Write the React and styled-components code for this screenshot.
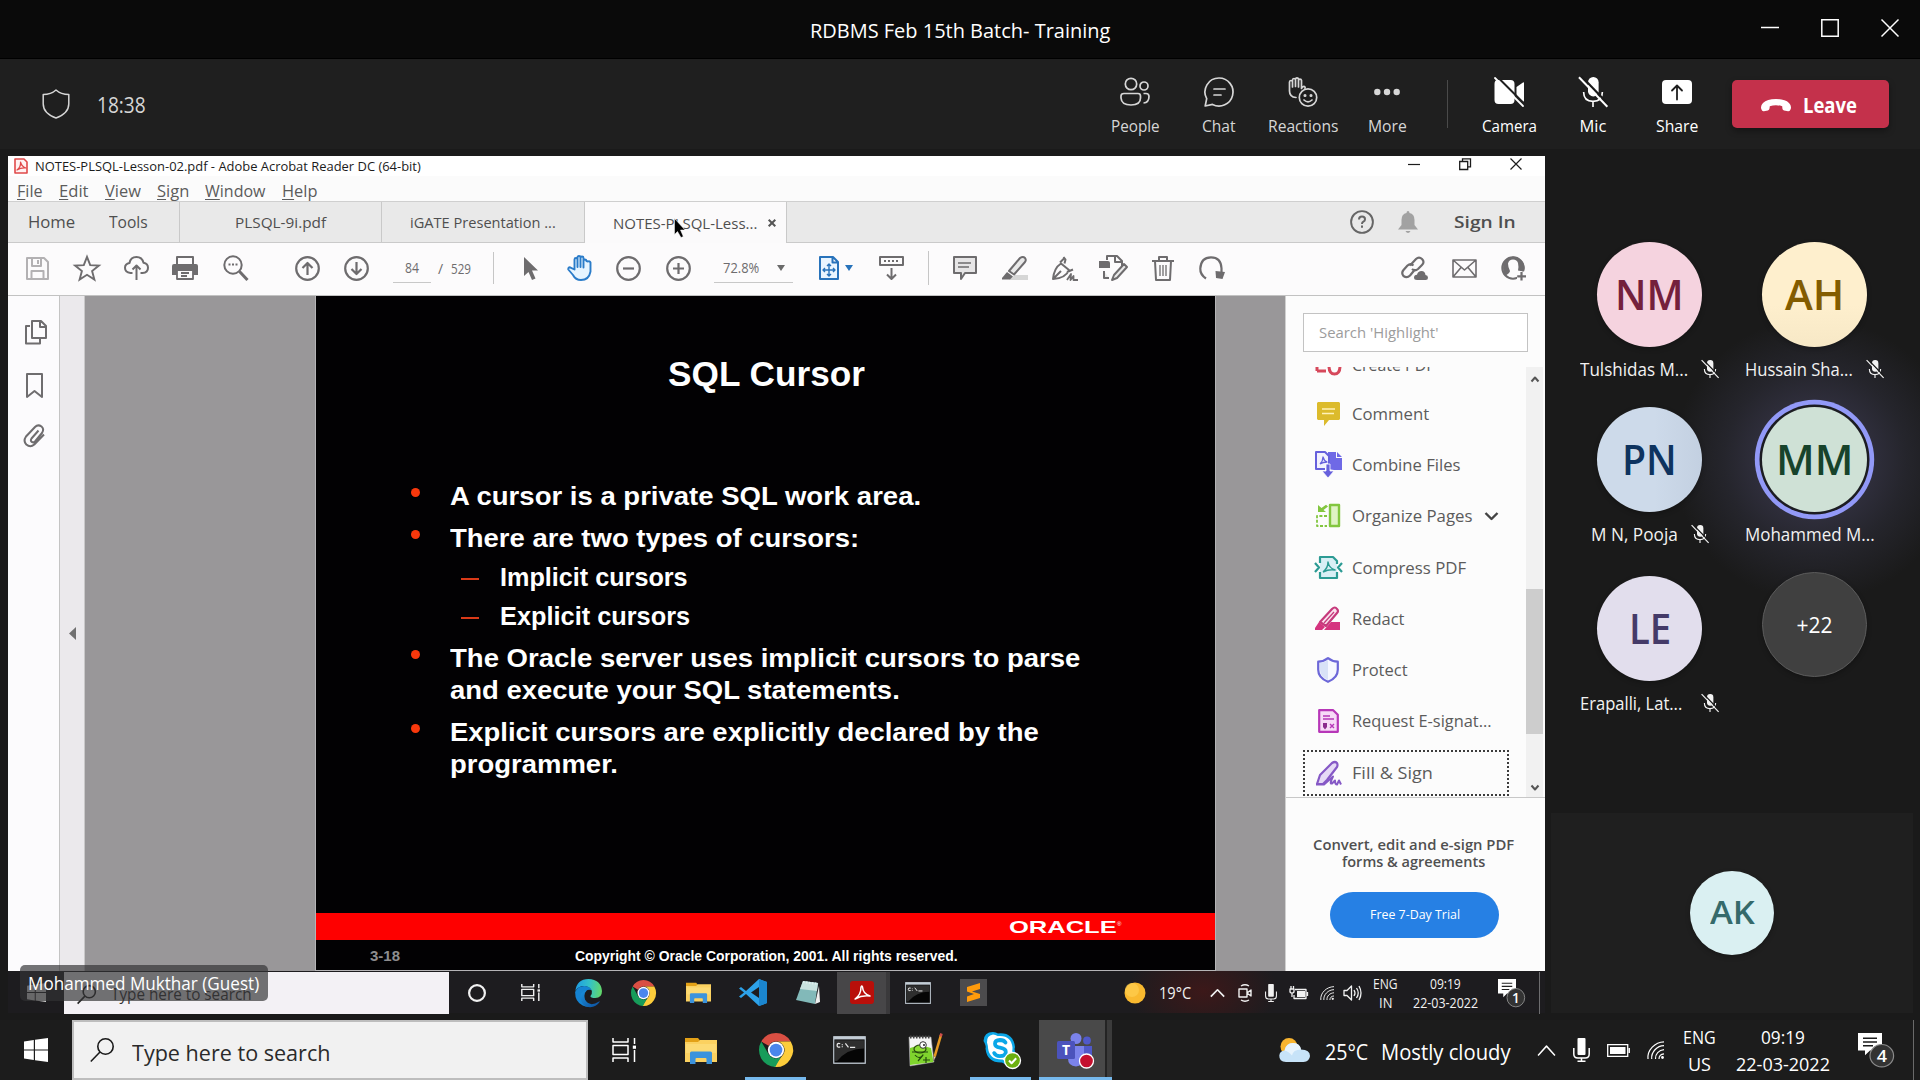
import React, { useLayoutEffect, useRef, useState } from "react";
import styled, { createGlobalStyle, css } from "styled-components";

const Global = createGlobalStyle`
  *, *::before, *::after { box-sizing: border-box; }
  html, body { margin: 0; padding: 0; background: #1a1a1a; overflow: hidden; }
  body { font-family: "Open Sans", "Noto Sans", sans-serif; }
  svg { display: block; flex: none; overflow: visible; }
`;

const arial = css`font-family: "Liberation Sans", Arial, sans-serif;`;

/* ---------- text that is condensed or stretched to a set measure ---------- */
const Measure = styled.span`
  display: block;
  flex: none;
  white-space: nowrap;
  width: ${(p) => p.$w}px;
  margin-left: ${(p) => p.$ml || 0}px;
  font-size: ${(p) => p.$size || "inherit"}${(p) => (p.$size ? "px" : "")};
  font-weight: ${(p) => p.$weight || "inherit"};
  color: ${(p) => p.$color || "inherit"};
`;
const Glyphs = styled.span`
  display: inline-block;
  transform-origin: 0 50%;
  vertical-align: top;
`;
function Fit({ w, ml, size, weight, color, children }) {
  const ref = useRef(null);
  const [scale, setScale] = useState(1);
  useLayoutEffect(() => {
    const natural = ref.current.offsetWidth;
    if (natural) setScale(w / natural);
  }, [w, children]);
  return (
    <Measure $w={w} $ml={ml} $size={size} $weight={weight} $color={color}>
      <Glyphs ref={ref} style={{ transform: `scaleX(${scale})` }}>{children}</Glyphs>
    </Measure>
  );
}

/* ---------- drawing helper ---------- */
const Drawing = styled.svg`
  width: ${(p) => p.$w}px;
  height: ${(p) => p.$h}px;
  margin-left: ${(p) => p.$ml || 0}px;
  fill: none;
  stroke: ${(p) => p.$c || "currentColor"};
  stroke-width: ${(p) => p.$sw || 2};
  stroke-linejoin: round;
  stroke-linecap: ${(p) => p.$cap || "butt"};
`;
function I({ w, h, ml, c, sw, cap, vb, children }) {
  return (
    <Drawing $w={w} $h={h || w} $ml={ml} $c={c} $sw={sw} $cap={cap} viewBox={vb || `0 0 ${w} ${h || w}`} preserveAspectRatio="none">
      {children}
    </Drawing>
  );
}

const Grow = styled.div`flex: 1;`;
const Rule = styled.div`
  flex: none;
  width: 1px;
  height: ${(p) => p.$h}px;
  margin-left: ${(p) => p.$ml || 0}px;
  background: ${(p) => p.$c};
`;

/* ---------- shell ---------- */
const Screen = styled.div`
  width: 1920px;
  height: 1080px;
  display: flex;
  flex-direction: column;
  background: #1a1a1a;
  overflow: hidden;
`;
const TitleBar = styled.header`
  height: 59px;
  flex: none;
  display: grid;
  grid-template-columns: 1fr auto 1fr;
  align-items: center;
  background: #0a0a0a;
  border-bottom: 1px solid #000;
  color: #fff;
  line-height: 30px;
  padding-top: 1px;
`;
const WindowButtons = styled.div`
  display: flex;
  justify-content: flex-end;
  align-items: center;
  gap: ${(p) => p.$gap}px;
  padding: 0 ${(p) => p.$pr}px ${(p) => p.$pb || 0}px 0;
`;
const CallBar = styled.div`
  height: 90px;
  flex: none;
  display: flex;
  align-items: flex-start;
  background: #1f1f1f;
  color: #d6d6d6;
`;
const CallInfo = styled.div`
  display: flex;
  align-items: center;
  height: 90px;
  padding-left: 42px;
`;
const Clock = styled.div`
  padding-top: 2px;
  line-height: 30px;
`;
const CallDivider = styled.div`
  width: 1px;
  height: 48px;
  margin: 21px 19px 0 18px;
  background: #4a4a4a;
`;
const CallButton = styled.div`
  width: 84px;
  display: flex;
  flex-direction: column;
  align-items: center;
  padding-top: 18px;
  color: ${(p) => (p.$bright ? "#fff" : "#d6d6d6")};
`;
const CallIcon = styled.div`
  height: 30px;
  display: flex;
  align-items: center;
`;
const CallLabel = styled.div`
  margin-top: 8px;
  line-height: 22px;
  font-size: 16.5px;
`;
const Leave = styled.div`
  width: 157px;
  height: 48px;
  margin: 21px 31px 0 13px;
  padding: 2px 0 0 29px;
  display: flex;
  align-items: center;
  background: #c4314b;
  border-radius: 5px;
  color: #fff;
  box-shadow: 0 3px 6px rgba(0, 0, 0, 0.35);
`;
const Main = styled.main`
  height: 871px;
  flex: none;
  display: flex;
  padding: 7px 0 0 8px;
`;

/* ---------- shared desktop ---------- */
const Stage = styled.section`
  position: relative;
  width: 1537px;
  height: 857px;
  flex: none;
  display: flex;
  flex-direction: column;
  background: #fdfdfd;
  color: #5a5a5a;
`;
const AppTitle = styled.div`
  height: 20px;
  display: flex;
  align-items: center;
  padding-left: 6px;
  color: #1c1c1c;
  background: #fff;
  line-height: 18px;
`;
const MenuRow = styled.div`
  height: 25px;
  padding: 5px 0 0 9px;
  display: flex;
  gap: 16px;
  line-height: 20px;
  font-size: 15.5px;
  color: #5c5c5c;
  background: #fbfbfb;
`;
const Access = styled.span`text-decoration: underline; text-underline-offset: 2px;`;
const TabStrip = styled.div`
  height: 42px;
  display: flex;
  align-items: stretch;
  background: #e9e9e9;
  border-top: 1px solid #cfcfcf;
  border-bottom: 1px solid #cacaca;
  line-height: 24px;
  color: #4f4f4f;
`;
const HomeTabs = styled.div`
  width: 172px;
  padding-left: 20px;
  display: flex;
  align-items: center;
  border-right: 1px solid #c9c9c9;
`;
const DocTab = styled.div`
  width: ${(p) => p.$w}px;
  display: flex;
  align-items: center;
  justify-content: ${(p) => (p.$active ? "flex-start" : "center")};
  padding-left: ${(p) => (p.$active ? 28 : 0)}px;
  border-right: 1px solid #c9c9c9;
  background: ${(p) => (p.$active ? "#fbfafb" : "transparent")};
  margin-bottom: ${(p) => (p.$active ? -1 : 0)}px;
`;
const TabTools = styled.div`
  display: flex;
  align-items: center;
  padding-right: 29px;
`;
const ToolRow = styled.div`
  height: 53px;
  padding: 0 18px 2px 18px;
  display: flex;
  align-items: center;
  color: #6e6c6e;
  border-bottom: 1px solid #c2c2c2;
  background: #fcfbfc;
`;
const Field = styled.div`
  width: ${(p) => p.$w}px;
  height: 30px;
  margin-left: ${(p) => p.$ml}px;
  padding-left: ${(p) => p.$pl}px;
  display: flex;
  align-items: center;
  border-bottom: 1px solid #c8c8c8;
`;
const Workspace = styled.div`
  height: 675px;
  display: flex;
  background: #999799;
`;
const NavRail = styled.div`
  width: 52px;
  padding: 24px 0 0 15px;
  display: flex;
  flex-direction: column;
  background: #fcfbfd;
  border-right: 1px solid #c4c4c4;
  color: #6f6d6f;
`;
const Collapse = styled.div`
  width: 25px;
  display: flex;
  align-items: center;
  justify-content: center;
  background: #ebe9ec;
  border-right: 1px solid #c9c8c9;
`;
const Slide = styled.article`
  ${arial}
  width: 901px;
  margin: 0 69px 0 230px;
  display: flex;
  flex-direction: column;
  background: #020103;
  border: solid #b5b4b6;
  border-width: 0 1px 1px 1px;
  color: #fff;
  font-weight: 700;
`;
const SlideTitle = styled.div`
  margin: 58px 0 85px 352px;
  height: 40px;
  line-height: 40px;
`;
const Bullets = styled.div`
  flex: 1;
  padding: 0.5px 0 0 95px;
  font-size: 26px;
  line-height: 32px;
`;
const Bullet = styled.div`
  display: grid;
  grid-template-columns: 39px 1fr;
  margin-left: ${(p) => (p.$sub ? 50 : 0)}px;
  margin-bottom: ${(p) => p.$mb || 0}px;
`;
const Dot = styled.i`
  width: 9px;
  height: 9px;
  margin-top: 8px;
  border-radius: 50%;
  background: #f8380c;
`;
const Dash = styled.i`
  width: 18px;
  height: 2px;
  margin-top: 17px;
  background: #d93a18;
`;
const RedBand = styled.div`
  height: 27px;
  padding: 1px 0 0 693px;
  display: flex;
  align-items: center;
  background: #fe0000;
  line-height: 27px;
`;
const Registered = styled.sup`
  ${arial}
  font-size: 6px;
  line-height: 8px;
  font-weight: 400;
  align-self: flex-start;
  margin-top: 6px;
`;
const SlideFoot = styled.div`
  height: 30px;
  padding: 1px 0 0 54px;
  display: flex;
  align-items: center;
  line-height: 20px;
`;

/* ---------- tools pane ---------- */
const ToolsPane = styled.aside`
  width: 260px;
  display: flex;
  flex-direction: column;
  background: #fcfcfc;
  border-left: 1px solid #d0d0d0;
`;
const SearchTools = styled.div`
  width: 225px;
  height: 39px;
  margin: 17px 0 15px 17px;
  padding: 0 0 2px 15px;
  display: flex;
  align-items: center;
  border: 1px solid #c3c3c3;
  background: #fff;
  color: #9c9c9c;
`;
const ToolArea = styled.div`
  height: 431px;
  display: flex;
  justify-content: space-between;
  padding: 0 2px 0 17px;
  border-bottom: 1px solid #c8c8c8;
`;
const ToolList = styled.div`
  width: 206px;
  overflow: hidden;
`;
const ToolItem = styled.div`
  height: ${(p) => p.$h || 51.3}px;
  display: flex;
  align-items: center;
  margin-top: ${(p) => p.$mt || 0}px;
  padding-top: ${(p) => p.$pt || 0}px;
  padding-left: ${(p) => (p.$focus ? 9 : 11)}px;
  border: ${(p) => (p.$focus ? "2px dotted #3c3c3c" : "0")};
  color: #5b5b5b;
  font-size: 16.5px;
  line-height: 24px;
`;
const ToolGlyph = styled.div`
  width: 28px;
  margin-right: 10px;
  display: flex;
  justify-content: center;
`;
const ScrollTrack = styled.div`
  width: 17px;
  padding: 9px 0 6px;
  display: flex;
  flex-direction: column;
  align-items: center;
  background: #f1f1f1;
`;
const ScrollThumb = styled.div`
  width: 17px;
  height: 145px;
  margin: 207px 0 auto;
  background: #cdcdcd;
`;
const Promo = styled.div`
  flex: 1;
  padding-top: 39px;
  display: flex;
  flex-direction: column;
  align-items: center;
  padding-right: 4px;
  line-height: 17px;
  color: #505050;
`;
const Trial = styled.div`
  width: 169px;
  height: 46px;
  margin: 21px 0 0 2px;
  padding-bottom: 1px;
  display: flex;
  align-items: center;
  justify-content: center;
  border-radius: 23px;
  background: #2680e4;
  color: #fff;
`;

/* ---------- taskbars ---------- */
const GuestBar = styled.div`
  height: 42px;
  display: flex;
  align-items: center;
  padding: 1px 5px 0 0;
  color: #f1f1f1;
  background: radial-gradient(ellipse 75px 50px at 1195px 20px, #3c1819, rgba(60, 24, 25, 0)), #1d1c1f;
`;
const GuestStart = styled.div`
  width: 56px;
  height: 42px;
  display: flex;
  align-items: center;
  justify-content: center;
`;
const GuestSearch = styled.div`
  width: 385px;
  height: 42px;
  padding: 3px 0 0 13px;
  display: flex;
  align-items: center;
  background: #f3f1f5;
  color: #333;
`;
const GuestActive = styled.div`
  width: 53px;
  height: 42px;
  margin-left: 17px;
  display: flex;
  align-items: center;
  justify-content: center;
  background: #474648;
  border-right: 4px solid #3a393b;
`;
const Stack = styled.div`
  width: ${(p) => p.$w}px;
  margin-left: ${(p) => p.$ml}px;
  padding-top: ${(p) => p.$pt}px;
  display: flex;
  flex-direction: column;
  align-items: center;
  font-size: ${(p) => p.$size}px;
  line-height: ${(p) => p.$lh}px;
`;
const Presenter = styled.div`
  position: absolute;
  left: 12px;
  bottom: 12px;
  width: 248px;
  height: 36px;
  padding: 0 0 1px 8px;
  display: flex;
  align-items: center;
  border-radius: 5px;
  background: rgba(50, 50, 52, 0.68);
  color: #fff;
  line-height: 24px;
`;
const Pointer = styled.div`
  position: absolute;
  left: 666px;
  top: 62px;
`;
const Taskbar = styled.footer`
  height: 60px;
  flex: none;
  display: flex;
  align-items: center;
  padding-right: 6px;
  background: #1c1c1c;
  color: #fff;
`;
const Start = styled.div`
  width: 72px;
  display: flex;
  justify-content: center;
`;
const Search = styled.div`
  width: 516px;
  height: 60px;
  display: flex;
  align-items: center;
  padding-left: 16px;
  border: 2px solid #bdbdbd;
  background: #f1f1f1;
  color: #2a2a2a;
  line-height: 32px;
`;
const SearchHint = styled.div`
  padding-top: 3px;
  margin-left: 18px;
`;
const TaskButton = styled.div`
  width: ${(p) => p.$w || 61}px;
  height: 60px;
  margin-left: ${(p) => p.$ml}px;
  display: flex;
  align-items: center;
  justify-content: center;
  border-bottom: 3px solid ${(p) => (p.$open ? "#76b9ed" : "transparent")};
  padding-top: 3px;
  background: ${(p) => (p.$active ? "linear-gradient(90deg, #494949 66px, #242424 66px, #242424 68px, #3b3b3b 68px)" : "transparent")};
  padding-right: ${(p) => (p.$active ? 1 : 0)}px;
`;

/* ---------- participants ---------- */
const Side = styled.aside`
  width: 375px;
  margin-top: -7px;
  display: flex;
  flex-direction: column;
  padding: 93px 7px 7px 6px;
  background: radial-gradient(circle 142px at 270px 311px, #31303f 35%, #25252c 64%, rgba(26, 26, 26, 0) 100%);
`;
const Roster = styled.div`
  display: grid;
  grid-template-columns: 165px 165px;
  row-gap: 26px;
  padding-left: 16px;
`;
const Person = styled.div`
  height: 139px;
  display: flex;
  flex-direction: column;
  align-items: center;
  margin-top: ${(p) => p.$mt || 0}px;
`;
const Avatar = styled.div`
  width: ${(p) => p.$d || 105}px;
  height: ${(p) => p.$d || 105}px;
  flex: none;
  display: flex;
  align-items: center;
  justify-content: center;
  padding-bottom: ${(p) => (p.$rim ? 0 : 2)}px;
  border-radius: 50%;
  background: ${(p) => p.$bg};
  color: ${(p) => p.$fg};
  border: ${(p) => (p.$rim ? "1px solid #5b5b5b" : "0")};
  box-shadow: ${(p) => (p.$speaking ? "0 0 0 2.5px #1c1c22, 0 0 0 7.2px #9299f7" : "0 2px 5px rgba(0,0,0,.25)")};
  line-height: 50px;
`;
const NameLine = styled.div`
  height: 24px;
  margin-top: 10px;
  display: flex;
  align-items: center;
  justify-content: ${(p) => (p.$min ? "space-between" : "flex-start")};
  gap: 13px;
  color: #f2f2f2;
  line-height: 24px;
  font-size: 18px;
  min-width: ${(p) => p.$min || 0}px;
`;
const SelfTile = styled.div`
  width: 362px;
  height: 200px;
  margin-top: auto;
  display: flex;
  align-items: center;
  justify-content: center;
  background: #1f1f1f;
`;

/* ---------- icons ---------- */
const WinLogo = ({ s, c }) => (
  <I w={s} vb="0 0 24 24"><path stroke="none" fill={c} d="M0 3.4 9.8 2v9.4H0zM11 1.8 24 0v11.4H11zM0 12.6h9.8V22L0 20.6zM11 12.6h13V24l-13-1.8z" /></I>
);
const Glass = ({ w, c, sw }) => (
  <I w={w} vb="0 0 24 24" c={c} sw={sw}><circle cx="15.5" cy="8.5" r="7.7" /><path d="M10 14 .8 23.5" /></I>
);
const TaskView = ({ w, h, ml, sw }) => (
  <I w={w} h={h} ml={ml} vb="0 0 24 24" sw={sw}>
    <path d="M1 0v4h15V0M1 24v-4h15v4M1 7.5h15v9H1zM22.5 0v6M22.5 12v12" /><path d="M20.8 7.6h3.2v3.2h-3.2z" fill="currentColor" stroke="none" />
  </I>
);
const Chrome = ({ w, h, ml }) => (
  <I w={w} h={h} ml={ml} vb="0 0 48 48">
    <g stroke="none">
      <path fill="#d94f43" d="M24 0a24 24 0 0 1 20.8 12H24a12 12 0 0 0-10.4 6L3.2 12A24 24 0 0 1 24 0z" />
      <path fill="#fdcd3b" d="M24 12h20.8A24 24 0 0 1 21 47.8L34.4 30A12 12 0 0 0 24 12z" />
      <path fill="#179c5a" d="M3.2 12 13.6 30A12 12 0 0 0 31 33.700L23 48A24 24 0 0 1 3.200 12z" />
      <circle cx="24" cy="24" r="11.5" fill="#fff" /><circle cx="24" cy="24" r="9" fill="#4a86ec" />
    </g>
  </I>
);
const Edge = ({ w, h, ml }) => (
  <I w={w} h={h} ml={ml} vb="0 0 28 28">
    <defs>
      <linearGradient id="edgeWave" x1="0" y1=".3" x2="1" y2=".4"><stop offset="0" stopColor="#1c9be6" /><stop offset=".55" stopColor="#35c3c4" /><stop offset="1" stopColor="#62d76b" /></linearGradient>
      <linearGradient id="edgeBase" x1="0" y1="0" x2="1" y2="1"><stop offset="0" stopColor="#1b93e0" /><stop offset="1" stopColor="#0d4e9c" /></linearGradient>
    </defs>
    <g stroke="none">
      <path fill="url(#edgeWave)" d="M.3 12Q2 0 14 0q13 .5 14 12 0 7-7 7-5 0-5-2 2-2 1.500-5Q16 8 10.500 7 4 6.500.3 12z" />
      <path fill="#1583d2" d="M.1 13Q3 6.500 10.500 7q5 .5 6.500 4-5-1.500-7 3-2 6 3.500 10.500 3 2 5 2Q14 29 8 26.500 0 23 .1 13z" />
      <path fill="url(#edgeBase)" d="M12.500 11q-5 5-1.500 11 5 6 14 .5 1-.5.500.5-4 6-12 5-7-1.500-8-9Q5 13 12.500 11z" />
    </g>
  </I>
);
const Folder = ({ w, h, ml }) => (
  <I w={w} h={h} ml={ml} vb="0 0 32 27">
    <g stroke="none">
      <path fill="#e3a117" d="M0 1h13l2 2.5V6H0z" /><path fill="#fbd160" d="M0 5h13l2-2h17v22H0z" />
      <path fill="#fddf82" d="M1 7h30v9H1z" opacity=".6" />
      <path fill="#3c93dc" d="M5 27V16q0-1.500 1.500-1.500h19Q27 14.500 27 16v11h-5.500v-5q0-1-1-1h-9q-1 0-1 1v5z" />
    </g>
  </I>
);
const Cmd = ({ w, h, ml }) => (
  <I w={w} h={h} ml={ml} vb="0 0 32 27">
    <rect x=".7" y=".7" width="30.600" height="25.600" fill="#050505" stroke="#aab2ba" strokeWidth="1.4" />
    <path d="M1 2h30" stroke="#c3cdd6" strokeWidth="2.600" /><path d="M2 4h28v8Q14 12 4 24H2z" fill="#4a4a4a" stroke="none" opacity=".6" />
    <path d="M7 7.500q-3-1-3 1.500t3 1.500M9 8v.8M9 10v.8M12 7l3 4M16.500 11h5" stroke="#e8e8e8" strokeWidth="1.200" />
  </I>
);
const Mic = ({ w, h, ml }) => (
  <I w={w} h={h} ml={ml} vb="0 0 17 24" sw="1.500">
    <rect x="4.500" y="0" width="8" height="17" rx="1" fill="currentColor" stroke="none" /><path d="M.8 10v6q0 4 4 4h7.400q4 0 4-4v-6M8.500 20v3M4.500 23.300h8" />
  </I>
);
const Wifi = ({ w, h, ml }) => (
  <I w={w} h={h} ml={ml} vb="0 0 17 18" sw="1.200">
    <path d="M1 18C0 9 8 1 17 .8M4.700 18C4 11 10 4.800 17 4.700M8.500 18C8 13 12 9 17 8.700M12 18c0-3 2-5 5-5.200" /><circle cx="15.500" cy="16.500" r="1.400" fill="currentColor" stroke="none" />
  </I>
);
const Caret = ({ w, h, ml, sw }) => <I w={w} h={h} ml={ml} vb="0 0 18 10" sw={sw}><path d="M1 9.500 9 1l8 8.500" /></I>;
const Notice = ({ w, h, ml, n, bg }) => (
  <I w={w} h={h} ml={ml} vb="0 0 36 36">
    <path d="M0 0h24v18.500H12l-5 5v-5H0z" fill="#fff" stroke="none" /><path d="M5 5.500h14M5 9.500h14M5 13.500h10" stroke={bg} strokeWidth="1.500" />
    <circle cx="23.800" cy="24" r="11.800" fill="#333" stroke="#8b8b8b" strokeWidth="1.200" />
    <text x="23.800" y="30.500" textAnchor="middle" fontSize="18" fontWeight="600" fill="#fff" stroke="none" fontFamily="Open Sans, sans-serif">{n}</text>
  </I>
);
const MicOff = ({ w, h, sw = 1.5 }) => (
  <I w={w} h={h || w} vb="0 0 24 24" sw={sw}>
    <rect x="8" y="0" width="8.500" height="15.500" rx="4.200" fill="currentColor" stroke="none" />
    <path d="M4.500 12q0 7.500 7.500 7.500t7.500-7.500M12 19.500V24" /><path d="M2.500-.8 24.500 22" stroke="#1a1a1a" strokeWidth="1.800" /><path d="M.8.200 23.500 23.800" strokeWidth="1.600" />
  </I>
);
const DropArrow = ({ ml, c }) => <I w={8} h={6} ml={ml}><path d="M0 0h8L4 6z" fill={c} stroke="none" /></I>;

const people = [
  { i: "NM", iw: 69, n: "Tulshidas M...", w: 108, bg: "#f5d3df", fg: "#74203c" },
  { i: "AH", iw: 59, n: "Hussain Sha...", w: 108, bg: "linear-gradient(#feefcd 60%, #f7e8c6)", fg: "#835c00" },
  { i: "PN", iw: 55, n: "M N, Pooja", w: 87, bg: "linear-gradient(90deg,#cddaea 55%,#c3d0e1)", fg: "#0e335f" },
  { i: "MM", iw: 77, n: "Mohammed M...", w: 130, bg: "#cfe1d6", fg: "#17432b", speaking: true },
  { i: "LE", iw: 42, n: "Erapalli, Lat...", w: 102, bg: "#e2deed", fg: "#443a68", mt: 4, min: 139 },
];

const tools = [
  { n: "Comment", w: 77, g: <I w={23} h={24}><path fill="#dcbb2c" stroke="none" d="M1 0h21l1 1v16l-1 1H12l-5 6v-6H1l-1-1V1z" /><path d="M5 7h13M5 11.500h12" stroke="#fff2b8" strokeWidth="1.600" /></I> },
  { n: "Combine Files", w: 109, g: <I w={27} h={27}><path fill="#6f69e6" stroke="none" d="M13 1h8v6h6v12h-8l-6-1zM22 1l5 5h-5z" /><path d="M10 18H1V1h9l4 4v9" fill="#f2f1fd" stroke="#6660dc" /><path d="M5 13q3-3 3-7 1 4 4 5-4 0-7 2" stroke="#6660dc" strokeWidth="1.300" /><path d="M11 13h4v7h4l-6 7-6-7h4z" fill="#6660dc" stroke="#fff" strokeWidth=".8" /></I> },
  { n: "Organize Pages", w: 120, more: true, g: <I w={25} h={24} c="#82c63f"><path d="M14 1h9v21h-9z" fill="#dff3c4" strokeWidth="2.400" /><path d="M11 12H1v10h10" strokeDasharray="3 1.600" strokeWidth="1.800" /><path d="M2 1v7h8L7.500 6 12 2.500 10 .8 5.500 4z" fill="#82c63f" stroke="none" /></I> },
  { n: "Compress PDF", w: 114, g: <I w={27} h={24} c="#2c9b94"><path d="M5 2h13l4 4v16H5z" fill="#d9eff5" stroke="none" /><path d="M5 7V1h13l4 4v3M5 16v6h17v-6M0 7l4 4.500L0 16M27 7l-4 4.500 4 4.500" strokeWidth="2.200" /><path d="M8 16q5-4 5-10 1 6 7 8-6-1-12 2" strokeWidth="1.500" /></I> },
  { n: "Redact", w: 53, g: <I w={26} h={23} c="#c63a7c"><path d="M5 15 17 2q3-3 5 0 2 2 0 4L11 19z" fill="#fbe2ee" strokeWidth="2.200" /><path d="M16 15h9v8H9zM4 15l6 5-3 3H0v-2z" fill="#d5347f" stroke="none" /><path d="M9 16 19 5" strokeWidth="1.300" /></I> },
  { n: "Protect", w: 56, g: <I w={22} h={26} c="#6c67d8"><path d="M11 1.200q4 3.300 9.800 3.500v8q0 8-9.800 12.100Q1.200 20.700 1.200 12.700v-8Q7 4.500 11 1.200z" fill="#f6f8ff" strokeWidth="2.200" /><path d="M11 3v20q-8-4-8-10V6q4 0 8-3z" fill="#d9e2f7" stroke="none" /></I> },
  { n: "Request E-signat...", w: 140, g: <I w={21} h={24} c="#b737b8"><path d="M1.200 1.200h14l4.600 4.600v17H1.200z" fill="#f7daf7" strokeWidth="2.200" /><path d="M5 7h7M5 10h11M12 15l4 4M16 15l-4 4" strokeWidth="1.400" /><path d="M5 14h4v4l-2 2.500L5 18z" fill="#8c2a8e" stroke="none" /></I> },
  { n: "Fill & Sign", w: 81, focus: true, g: <I w={27} h={25} c="#8659c6"><path d="M2 23 5 14 17 2q3-2 5 0 1 2 0 4L12 19l-4 4z" fill="#e6daf6" strokeWidth="2.200" /><path d="M1 23.500h8l9-8q-4 8-1 7l3-3q0 4 2 4l2-4 2 4" strokeWidth="2" /></I> },
];

export default function App() {
  return (
    <Screen>
      <Global />
      <TitleBar>
        <span />
        <Fit w={300} size={20.5}>RDBMS Feb 15th Batch- Training</Fit>
        <WindowButtons $gap={42} $pr={21} $pb={4}>
          <I w={18} sw="1.500"><path d="M0 8.500h18" /></I>
          <I w={18} sw="1.500"><path d="M.8.800h16.400v16.400H.8z" strokeLinejoin="miter" /></I>
          <I w={18} sw="1.500"><path d="M.5.500l17 17M17.500.500l-17 17" /></I>
        </WindowButtons>
      </TitleBar>

      <CallBar>
        <CallInfo>
          <I w={28} h={30} sw="1.500"><path d="M14 1q5 4.500 12.800 4.500v9.300Q26.800 24.500 14 29 1.200 24.500 1.200 14.800V5.500Q9 5.500 14 1z" /></I>
          <Clock><Fit w={49} ml={27} size={21}>18:38</Fit></Clock>
        </CallInfo>
        <Grow />
        <CallButton>
          <CallIcon><I w={30} sw="1.700"><circle cx="11" cy="7" r="5.700" /><circle cx="24" cy="9" r="4" /><path d="M4 16.500h14q2.500 0 2.500 2.500v2q0 7-9.500 7t-10-7v-2q0-2.500 3-2.500zM23.500 16.500H26q3 0 3 3 0 6-5.500 6.500" /></I></CallIcon>
          <CallLabel><Fit w={49}>People</Fit></CallLabel>
        </CallButton>
        <CallButton>
          <CallIcon><I w={30} sw="1.700"><path d="M15 1a14 14 0 1 1-6.500 26.400L1.200 29l1.500-7.300A14 14 0 0 1 15 1zM10 12h11M10 18h7" strokeLinecap="round" /></I></CallIcon>
          <CallLabel><Fit w={34}>Chat</Fit></CallLabel>
        </CallButton>
        <CallButton>
          <CallIcon><I w={30} sw="1.700" cap="round"><path d="M1.500 5v9q0 6 6.500 6.500M1.500 5q.2-1.500 1.500-1.500T4.500 5v5V3Q4.700 1.500 6 1.500T7.500 3v6.500V2Q7.700.8 9 .8T10.500 2v8V3.500Q10.700 2.200 12 2.200t1.500 1.300v8q1-2.500 3-2 1 .5.500 1.800" /><circle cx="20" cy="20.500" r="8.700" /><circle cx="17" cy="18.500" r=".7" fill="currentColor" /><circle cx="23" cy="18.500" r=".7" fill="currentColor" /><path d="M16 23q4 3.700 8 0" /></I></CallIcon>
          <CallLabel><Fit w={70}>Reactions</Fit></CallLabel>
        </CallButton>
        <CallButton>
          <CallIcon><I w={26} h={8}><g fill="currentColor" stroke="none"><circle cx="3.300" cy="4" r="3.200" /><circle cx="13" cy="4" r="3.200" /><circle cx="22.700" cy="4" r="3.200" /></g></I></CallIcon>
          <CallLabel><Fit w={39}>More</Fit></CallLabel>
        </CallButton>
        <CallDivider />
        <CallButton $bright>
          <CallIcon><I w={30}><path d="M3 3h13.500q4 0 4 4v16q0 4-4 4H4.500Q.5 27 .5 23V7q0-4 3-4zM22.500 10 29 5.500q1-.5 1 .5v18q0 1-1 .5L22.500 20z" fill="currentColor" stroke="none" /><path d="M3-.5 31 27.500" stroke="#1f1f1f" strokeWidth="2" /><path d="M1 1l28 28" strokeWidth="1.800" strokeLinecap="round" /></I></CallIcon>
          <CallLabel><Fit w={55}>Camera</Fit></CallLabel>
        </CallButton>
        <CallButton $bright>
          <CallIcon><MicOff w={30} sw={1.3} /></CallIcon>
          <CallLabel><Fit w={27}>Mic</Fit></CallLabel>
        </CallButton>
        <CallButton $bright>
          <CallIcon><I w={30} h={24}><rect width="30" height="24" rx="4" fill="currentColor" stroke="none" /><path d="M15 19.500V6M10 10.500l5-5 5 5" stroke="#1f1f1f" strokeWidth="1.800" strokeLinecap="round" /></I></CallIcon>
          <CallLabel><Fit w={42}>Share</Fit></CallLabel>
        </CallButton>
        <Leave>
          <I w={30} h={13}><path stroke="none" fill="#fff" d="M15 0q9 0 13 4 3 3 1.500 6.500-.5 2-2.500 1.700l-4-.8q-1.500-.3-1.600-2l-.2-2.200Q15 5.300 8.800 7.200l-.3 2.300q-.2 1.600-1.600 1.900l-4 .8Q1 12.500.5 10.500-1 7 2 4q4-4 13-4z" /></I>
          <Fit w={54} ml={12} size={20.5} weight={700}>Leave</Fit>
        </Leave>
      </CallBar>

      <Main>
        <Stage>
          <AppTitle>
            <I w={14} h={16} c="#e04a4a" sw="1.600"><path d="M1 1h9l3 3v11H1z" fill="#fff2f2" /><path d="M3 12q4-3 3.500-8Q8 9 12 10 7 9.500 3 12z" strokeWidth="1.200" /></I>
            <Fit w={386} ml={7} size={13.5}>NOTES-PLSQL-Lesson-02.pdf - Adobe Acrobat Reader DC (64-bit)</Fit>
            <Grow />
            <WindowButtons $gap={39} $pr={23} $pb={4}>
              <I w={12} sw="1.200"><path d="M0 6.500h12" /></I>
              <I w={12} sw="1.300"><path d="M.7 3.500h8v8h-8zM3.500 3.200V.8h8v8H9" strokeLinejoin="miter" /></I>
              <I w={12} sw="1.200"><path d="M.5.500l11 11M11.500.500l-11 11" /></I>
            </WindowButtons>
          </AppTitle>
          <MenuRow>
            <Fit w={26}><Access>F</Access>ile</Fit>
            <Fit w={30}><Access>E</Access>dit</Fit>
            <Fit w={36}><Access>V</Access>iew</Fit>
            <Fit w={32}><Access>S</Access>ign</Fit>
            <Fit w={61}><Access>W</Access>indow</Fit>
            <Fit w={36}><Access>H</Access>elp</Fit>
          </MenuRow>
          <TabStrip>
            <HomeTabs>
              <Fit w={47} size={16}>Home</Fit>
              <Fit w={39} ml={34} size={16}>Tools</Fit>
            </HomeTabs>
            <DocTab $w={202}><Fit w={91} size={15}>PLSQL-9i.pdf</Fit></DocTab>
            <DocTab $w={203}><Fit w={146} size={15}>iGATE Presentation ...</Fit></DocTab>
            <DocTab $w={202} $active>
              <Fit w={144} size={15}>NOTES-PLSQL-Less...</Fit>
              <I w={8} ml={11} c="#555"><path d="M.7.700l6.600 6.600M7.300.700.700 7.300" /></I>
            </DocTab>
            <Grow />
            <TabTools>
              <I w={24} c="#666"><circle cx="12" cy="12" r="10.900" strokeWidth="1.900" /><path d="M9 9.500q0-3 3-3t3 2.700q0 1.600-1.600 2.500-1.400.8-1.400 2.300" /><path d="M12 15.500v2.200" /></I>
              <I w={20} h={22} ml={24}><path fill="#a2a2a2" stroke="none" d="M10 0q1.500 0 1.500 2 5 1 5 7v5l3.500 4.500H0L3.500 14V9q0-6 5-7 0-2 1.500-2zM7.500 20h5q-1 2-2.500 2t-2.500-2z" /></I>
              <Fit w={62} ml={36} size={17} weight={600}>Sign In</Fit>
            </TabTools>
          </TabStrip>
          <ToolRow>
            <I w={23} c="#b3b1b3"><path d="M1 1h17l4 4v17H1zM5.500 22v-8h12v8M6 1v8h9V1M12 3v4" /></I>
            <I w={26} ml={25}><path d="m13 1.800 3.200 8.300 8.700.4-6.800 5.500 2.300 8.600L13 19.800l-7.400 4.800L7.900 16 1.100 10.500l8.700-.4z" strokeWidth="1.900" strokeLinejoin="miter" /></I>
            <I w={25} ml={24}><path d="M8.500 17H6.500Q1 16.500 1 11.800q0-4 4.500-4.800Q6.500 1 12.500 1q5.500 0 7 5.700 4.500.8 4.500 5 0 5-5.500 5.300h-2M12.500 24V10M8.500 13.500l4-4 4 4" /></I>
            <I w={26} h={24} ml={23}><path d="M5 8V1h16v7" /><path d="M2 8h22q2 0 2 2v9h-5v-5H5v5H0v-9q0-2 2-2z" fill="currentColor" stroke="none" /><path d="M5 14v9h16v-9zM9 17h8M9 20h6" strokeWidth="1.800" /></I>
            <I w={25} h={26} ml={25}><circle cx="10" cy="10" r="8.700" /><path d="m16.500 16.500 8 8.500" strokeWidth="3" /><path d="M5.500 9.500h2M9 9.500h2M12.500 9.500h2" /></I>
            <I w={25} ml={47} sw="2.200"><circle cx="12.500" cy="12.500" r="11.300" /><path d="M12.500 19V7M7.500 12l5-5 5 5" /></I>
            <I w={25} ml={24} sw="2.200"><circle cx="12.500" cy="12.500" r="11.300" /><path d="M12.500 6v12M7.500 13l5 5 5-5" /></I>
            <Field $w={38} $ml={24} $pl={12}><Fit w={14} size={14}>84</Fit></Field>
            <Fit w={5} ml={7} size={14}>/</Fit>
            <Fit w={20} ml={8} size={14}>529</Fit>
            <Rule $h={32} $ml={22} $c="#c6c6c6" />
            <I w={14} h={23} ml={30}><path d="M0 0v19l4.500-4 3.500 8 3.500-1.600L8 13.500h6z" fill="currentColor" stroke="none" /></I>
            <I w={25} h={26} ml={29} c="#2b7cc9" sw="1.900"><path d="M7.500 14.500V4.500q0-1.500 1.500-1.500t1.500 1.500V12 2.500Q10.500 1 12 1t1.500 1.500V12 3q0-1.500 1.500-1.500T16.500 3v9.500V6q0-1.500 1.400-1.500T19.500 6l1.500.5q1.600-.8 2.500 1v9Q22 25 14 25q-5.500 0-8-5L1.300 14.500Q1 12.500 3 12.300z" fill="#e6f4ff" /></I>
            <I w={25} ml={24} sw="2.200"><circle cx="12.500" cy="12.500" r="11.300" /><path d="M7 12.500h11" /></I>
            <I w={25} ml={25} sw="2.200"><circle cx="12.500" cy="12.500" r="11.300" /><path d="M7 12.500h11M12.500 7v11" /></I>
            <Field $w={79} $ml={23} $pl={9}>
              <Fit w={36} size={14}>72.8%</Fit>
              <DropArrow ml={18} c="#6a6a6a" />
            </Field>
            <I w={20} h={24} ml={26} c="#2873bb"><path d="M1 1h13l5 5v17H1zM13.500 1v5.500H19" fill="#e9f5ff" /><path d="M10 8v12M4 14h12M8 10l2-2 2 2M8 18l2 2 2-2M6 12l-2 2 2 2M14 12l2 2-2 2" strokeWidth="1.400" /></I>
            <DropArrow ml={6} c="#2873bb" />
            <I w={25} h={24} ml={26}><path d="M1 1h23v8H1z" /><path d="M5 5h15" strokeDasharray="2 2" /><path d="M12.500 12v10M8 18.500l4.500 4.500 4.500-4.500" /></I>
            <Rule $h={34} $ml={24} $c="#c6c6c6" />
            <I w={24} ml={24}><path d="M1 1h22v16H12l-4 6v-6H1z" fill="#e6e5e6" /><path d="M5 7h13M5 11h11" strokeWidth="1.500" /></I>
            <I w={26} h={24} ml={25}><path d="M13 19h13v5H7z" fill="#d6d6d6" stroke="none" /><path d="M7 15 18 2q3-2 5 0 1.500 2 0 4L12 18.500z" fill="#e9e9e9" /><path d="M5 16l6 4.500-3 3H0v-1.500z" fill="currentColor" stroke="none" /></I>
            <I w={27} h={25} ml={23}><path d="M2 23Q3 12 10 7.500l8 6.500q-3 8-16 9zM2 23l8-8M9 6.500l4-4M12.500 1l2 2.500-1 4M16 16l6-2.500" fill="none" /><path d="m16 24 4-6-.5 6 3-4v4h4.500" strokeWidth="1.800" /></I>
            <I w={28} h={26} ml={21}><path d="M8 5V1h10l5 5v6M16 1v6h6" /><path d="M0 6h9q2 0 2 2v5H0z" fill="currentColor" stroke="none" /><path d="M5 16v7h5M15 20 25 9l3 3-10 11-5 2z" fill="#e9e9e9" /></I>
            <I w={22} h={25} ml={25}><path d="M0 5h22M7 4V1h8v3M3 5l1 19h14l1-19" /><path d="M8 9v11M11 9v11M14 9v11" strokeWidth="1.300" /></I>
            <I w={26} h={24} ml={25} sw="2.200"><path d="M7 22.500Q1 18.500 1.300 12.500 2 1.300 12 1.300q10 0 10.500 11V20" /><path d="m16.500 15 9.500 1-2.500 7-6.500-1z" fill="currentColor" stroke="none" /></I>
            <Grow />
            <I w={27} h={24}><path d="M9 9.500 15 3q3-3 6 0t0 6l-4 4q-3 2.500-6 0M14 13.500l-5 6q-3 3-6.500.5-2.500-3 0-6l4-4.500q3-2.500 6 0" strokeWidth="2.200" /><path d="M16 24q-3 0-3-2.500t3-2.800q1-3.700 4.500-3.700t4 4q2.500.3 2.500 2.700T24.500 24z" fill="currentColor" stroke="none" /></I>
            <I w={25} h={19} ml={24}><path d="M1 1h23v17H1zM1 1l11.500 10L24 1M1 18l8-9.500M24 18l-8-9.500" strokeWidth="1.600" /></I>
            <I w={26} h={25} ml={24}><circle cx="12" cy="12" r="10.700" /><path d="M4 20Q0 12 4 5q4-4 8-4.500 6 .5 10 6 3 6 0 9l-5-1Q18 12 17 7q-1-3.500-5-3.500T7 7.500q0 4 2 7.500 0 2-5 5z" fill="currentColor" stroke="none" /><path d="M20.500 15.500v9M16 20h9" stroke="#fcfbfc" strokeWidth="6" /><path d="M20.500 16v8.500M16.200 20.300H25" strokeWidth="2.200" /></I>
          </ToolRow>

          <Workspace>
            <NavRail>
              <I w={22} h={25} ml={2}><path d="M7 1h9l5 5v12H7zM15 1v6h6M5 6H1v17.500h14V19" /></I>
              <I w={17} h={79} ml={3} vb="0 -28 17 79"><path d="M1 1h15v23l-7.500-6L1 24z" /></I>
              <I w={22} h={24}><path d="m15.500 6.500-7 8q-1.500 2.500.5 3.500 1.500 1 3-.5l7-8.500q2.500-4-.5-6.500-3.500-2.500-6.500.5L3 12.500q-3 4.500.3 8 4 3.500 8 0L21 10.500" /></I>
            </NavRail>
            <Collapse><I w={7} h={13}><path d="M7 0v13L0 6.500z" fill="#707070" stroke="none" /></I></Collapse>
            <Slide>
              <SlideTitle><Fit w={197} size={34.5}>SQL Cursor</Fit></SlideTitle>
              <Bullets>
                <Bullet $mb={10.5}><Dot /><Fit w={471}>A cursor is a private SQL work area.</Fit></Bullet>
                <Bullet $mb={7}><Dot /><Fit w={409}>There are two types of cursors:</Fit></Bullet>
                <Bullet $sub $mb={6.5}><Dash /><Fit w={188}>Implicit cursors</Fit></Bullet>
                <Bullet $sub $mb={10.5}><Dash /><Fit w={190}>Explicit cursors</Fit></Bullet>
                <Bullet $mb={10}><Dot /><div><Fit w={630}>The Oracle server uses implicit cursors to parse</Fit><Fit w={450}>and execute your SQL statements.</Fit></div></Bullet>
                <Bullet><Dot /><div><Fit w={589}>Explicit cursors are explicitly declared by the</Fit><Fit w={168}>programmer.</Fit></div></Bullet>
              </Bullets>
              <RedBand><Fit w={108} size={17}>ORACLE</Fit><Registered>®</Registered></RedBand>
              <SlideFoot>
                <Fit w={30} size={15.5} color="#8d8c8e">3-18</Fit>
                <Fit w={383} ml={175} size={14.5}>Copyright © Oracle Corporation, 2001. All rights reserved.</Fit>
              </SlideFoot>
            </Slide>
            <ToolsPane>
              <SearchTools><Fit w={119} size={15}>Search 'Highlight'</Fit></SearchTools>
              <ToolArea>
                <ToolList>
                  <ToolItem $mt={-30} $h={51} $pt={4}>
                    <ToolGlyph><I w={25} h={22} c="#d6485b"><path d="M1 17V1h10l4 4v4M1 17h9" strokeWidth="3" /><path d="M13 12q0 8 5.500 8t5.500-8" strokeWidth="3" /></I></ToolGlyph>
                    <Fit w={82}>Create PDF</Fit>
                  </ToolItem>
                  {tools.map((t) => (
                    <ToolItem key={t.n} $focus={t.focus} $h={t.focus ? 46 : 51.3} $mt={t.focus ? 3 : 0}>
                      <ToolGlyph>{t.g}</ToolGlyph>
                      <Fit w={t.w}>{t.n}</Fit>
                      {t.more && <I w={13} h={8} ml={13} c="#444" sw="2.400"><path d="m.5 1 6 6 6-6" /></I>}
                    </ToolItem>
                  ))}
                </ToolList>
                <ScrollTrack>
                  <I w={8} h={6} c="#555"><path d="M.5 5.500 4 1.500l3.500 4" /></I>
                  <ScrollThumb />
                  <I w={8} h={6} c="#555"><path d="M.5.500 4 4.500l3.500-4" /></I>
                </ScrollTrack>
              </ToolArea>
              <Promo>
                <Fit w={201} size={13.5} weight={600}>Convert, edit and e-sign PDF</Fit>
                <Fit w={143} size={13.5} weight={600}>forms &amp; agreements</Fit>
                <Trial><Fit w={90} size={13.5}>Free 7-Day Trial</Fit></Trial>
              </Promo>
            </ToolsPane>
          </Workspace>

          <GuestBar>
            <GuestStart><WinLogo s={19} c="#d8d8d8" /></GuestStart>
            <GuestSearch><Glass w={19} c="#222" sw="2" /><Fit w={141} ml={15} size={15.5}>Type here to search</Fit></GuestSearch>
            <I w={18} ml={19} sw="2.200"><circle cx="9" cy="9" r="7.900" /></I>
            <TaskView w={19} h={17} ml={35} sw="1.800" />
            <Edge w={27} h={28} ml={35} />
            <Chrome w={25} h={26} ml={29} />
            <Folder w={25} h={21} ml={30} />
            <I w={28} h={27} ml={28}><g stroke="none"><path d="M20 0l8 3v21l-8 3L7 15l-5 4-2-1.500 5-4-5-4L2 8l5 4z" fill="#2da2e9" /><path d="m20 8-8 5.500 8 5.500z" fill="#1d1c1f" /><path d="M20 0l8 3v21l-8 3z" fill="#1b86cf" /></g></I>
            <I w={25} h={25} ml={28}><path d="M8 1 23 3l-3 21-19-4z" fill="#82b9b9" stroke="none" /><path d="M8 1 23 3l-1 8L5 9z" fill="#c8e2df" stroke="none" /><path d="m8 2 15 2" stroke="#dfeeee" strokeDasharray="1.500 1.500" /><path d="m20 24 4-18 1 16z" fill="#eee" stroke="none" /></I>
            <GuestActive><I w={24} h={23}><rect width="24" height="23" rx="3" fill="#b90f0a" stroke="none" /><path d="M5 18q6-4 6-12 1-2 1.500 0 .5 7 7.500 9-8-1-15 3z" stroke="#fff" strokeWidth="1.500" /></I></GuestActive>
            <Cmd w={26} h={22} ml={15} />
            <I w={27} ml={29}><path d="M0 0h27v27H0z" fill="#4c4b4d" stroke="none" /><path d="m7 8 13-4v6l-8 2.500 8 2.500v4L7 23v-5.500l7-2.500-7-2.500z" fill="#ff9b0c" stroke="none" /></I>
            <Grow />
            <I w={22}><circle cx="11" cy="11" r="10.500" fill="#f9b92f" stroke="none" /><circle cx="8" cy="8" r="7" fill="#ffd257" opacity=".6" stroke="none" /></I>
            <Fit w={32} ml={13} size={15.5}>19°C</Fit>
            <Caret w={15} h={8} ml={19} sw="2" />
            <I w={14} h={18} ml={13} sw="1.400"><path d="M3 2q4-2.500 8 0M3 16q4 2.500 8 0M1 5h8v8H1zM9 9l4-3v6z" /></I>
            <Mic w={12} h={18} ml={13} />
            <I w={19} h={14} ml={12} sw="1.300"><path d="M6 3.500h11v9H5V9M18.500 6v4M1 3v3q2 2.500 4 0V3zM2 3V0M4.500 3V0M3 7v4" /><path d="M8 5h8v6H8z" fill="currentColor" stroke="none" /></I>
            <Wifi w={14} h={14} ml={12} />
            <I w={18} h={16} ml={9} sw="1.300"><path d="M1 5.500h3L8.500 1v14L4 10.500H1zM11 5q2 3 0 6M13.500 3q3.500 5 0 10M16 1q4 7 0 14" /></I>
            <Stack $w={25} $ml={12} $pt={1} $size={14} $lh={19.5}><Fit w={25}>ENG</Fit><Fit w={13}>IN</Fit></Stack>
            <Stack $w={65} $ml={15} $pt={1} $size={14} $lh={19.5}><Fit w={31}>09:19</Fit><Fit w={65}>22-03-2022</Fit></Stack>
            <Notice w={27} h={28} ml={20} n="1" bg="#222" />
            <Rule $h={42} $ml={14} $c="#6d6d6f" />
          </GuestBar>

          <Presenter><Fit w={231} size={18}>Mohammed Mukthar (Guest)</Fit></Presenter>
          <Pointer><I w={11} h={20}><path d="M.5.500v16l3-3L7 19.500l2.300-1L6.500 12H11z" fill="#000" stroke="#fff" strokeWidth=".5" /></I></Pointer>
        </Stage>

        <Side>
          <Roster>
            {people.map((p) => (
              <Person key={p.i} $mt={p.mt}>
                <Avatar $bg={p.bg} $fg={p.fg} $speaking={p.speaking}><Fit w={p.iw} size={42} weight={600}>{p.i}</Fit></Avatar>
                <NameLine $min={p.speaking ? 139 : p.min}><Fit w={p.w}>{p.n}</Fit>{!p.speaking && <MicOff w={18} />}</NameLine>
              </Person>
            ))}
            <Person><Avatar $bg="#404040" $fg="#fff" $rim><Fit w={36} size={21}>+22</Fit></Avatar></Person>
          </Roster>
          <SelfTile><Avatar $d={84} $bg="#daf0f2" $fg="#356a6b"><Fit w={45} size={33} weight={600}>AK</Fit></Avatar></SelfTile>
        </Side>
      </Main>

      <Taskbar>
        <Start><WinLogo s={24} c="#fff" /></Start>
        <Search><Glass w={24} c="#1a1a1a" sw="1.600" /><SearchHint><Fit w={198} size={22}>Type here to search</Fit></SearchHint></Search>
        <TaskView w={24} h={24} ml={24} sw="1.500" />
        <TaskButton $ml={34}><Folder w={32} h={27} /></TaskButton>
        <TaskButton $ml={14} $open><Chrome w={34} h={34} /></TaskButton>
        <TaskButton $ml={13}><Cmd w={33} h={28} /></TaskButton>
        <TaskButton $ml={14}>
          <I w={34} h={33}>
            <path d="M1 3h22l3 25-24 4z" fill="#f5f5f5" stroke="#999" strokeWidth=".6" /><path d="M2 14q10-4 21 0l2.500 14L2 31z" fill="#7fd42d" stroke="none" />
            <path d="M2 3h20" stroke="#444" strokeDasharray="1.500 1.500" strokeWidth="3" /><ellipse cx="12" cy="15" rx="6" ry="4" fill="#8ede35" stroke="#29470d" strokeWidth="1.200" /><circle cx="15" cy="11" r="3.300" fill="#fff" stroke="#333" strokeWidth="1" /><circle cx="16" cy="11" r="1" fill="#222" stroke="none" />
            <path d="M4 18h16M7 21q4 5 8 0l-5 6M15 26h7M18 23v6" stroke="#234b0c" strokeWidth="1.200" /><path d="M33 1 26.500 23" stroke="#e79a22" strokeWidth="2.600" /><path d="m25.500 22 2.200 1-2.200 4z" fill="#f0d7a6" stroke="#555" strokeWidth=".4" /><path d="m33.500-.5-1 3" stroke="#cf4f4c" strokeWidth="2.600" />
          </I>
        </TaskButton>
        <TaskButton $ml={15} $open>
          <I w={37} h={37} ml={3}>
            <path d="M9 0q3 0 5 1.500Q29 0 31 15q-1 2 0 5 1 11-8 12-3 0-5-1.500Q3 31 1.500 16.500 2.500 14-.5 9 0 0 9 0z" fill="#0ba7e8" stroke="none" />
            <path d="M9 2.500q2.500 0 4.500 1.600Q27 2.500 28.500 15.500q0 2-.3 3.500.8 9-5.700 10-2 0-4-1.500Q5.500 28 4 16q.2-1.500-1-5.500-.5-7 6-8z" fill="#fff" stroke="none" />
            <path d="M21.500 10.500Q20 8 16 8q-5 .2-5 3.700 0 3 5 3.900 6 1 5.800 4.500-.3 4-6 4-4.300 0-5.600-3" stroke="#0ba7e8" strokeWidth="3.800" strokeLinecap="round" />
            <circle cx="28.500" cy="28.500" r="8" fill="#6bb00f" stroke="#fff" strokeWidth="1.300" /><path d="m25 28.500 2.600 2.800 4.600-5" stroke="#fff" />
          </I>
        </TaskButton>
        <TaskButton $ml={8} $w={73} $open $active>
          <I w={36} h={34}>
            <g stroke="none"><circle cx="19" cy="5.500" r="5.500" fill="#7b83eb" /><circle cx="30" cy="7.500" r="3.900" fill="#5059c9" /><path d="M25 13h10v11q0 5-5 6-5 0-6-4z" fill="#5059c9" /><path d="M11 13h16v12q-1 8-8 8.500-8-.5-8-8z" fill="#7b83eb" /><rect y="8" width="18" height="18" rx="1.500" fill="#4b53bc" /></g>
            <text x="9" y="22" textAnchor="middle" fontSize="14" fontWeight="700" fill="#fff" stroke="none" fontFamily="Open Sans, sans-serif">T</text>
            <circle cx="29.500" cy="28" r="7" fill="#c4102e" stroke="#fff" strokeWidth="1.300" />
          </I>
        </TaskButton>
        <Grow />
        <I w={31} h={24}><g stroke="none"><circle cx="10" cy="8.500" r="8.500" fill="#f9b530" /><path d="M7 24Q0 23.500.3 17.500.8 13 5.500 12.500 7 5 14 5q7 .3 8 6.500 9 .3 9 6.500-.5 5.500-6.500 6z" fill="#c7e3f8" /><path d="M14 5q7 .3 8 6.500-8 0-9 6Q9 13 5.500 12.500 7 5 14 5z" fill="#e8f4fd" /></g></I>
        <Stack $w={186} $ml={15} $pt={3} $size={21} $lh={30}>
          <WeatherLine><Fit w={43}>25°C</Fit><Fit w={130}>Mostly cloudy</Fit></WeatherLine>
        </Stack>
        <Caret w={19} h={11} ml={26} sw="1.400" />
        <Mic w={17} h={24} ml={17} />
        <I w={23} h={13} ml={17} sw="1.300"><path d="M.7.700h20v11.600H.7zM22.300 4v5" strokeLinejoin="miter" /><path d="M3 3h15.500v7H3z" fill="currentColor" stroke="none" /></I>
        <Wifi w={17} h={18} ml={17} />
        <Stack $w={33} $ml={19} $pt={1} $size={18} $lh={27}><Fit w={33}>ENG</Fit><Fit w={23}>US</Fit></Stack>
        <Stack $w={94} $ml={20} $pt={1} $size={18} $lh={27}><Fit w={44}>09:19</Fit><Fit w={94}>22-03-2022</Fit></Stack>
        <Notice w={36} h={34} ml={28} n="4" bg="#1c1c1c" />
        <Rule $h={60} $ml={19} $c="#6a6a6a" />
      </Taskbar>
    </Screen>
  );
}

const WeatherLine = styled.div`
  display: flex;
  gap: 13px;
`;
